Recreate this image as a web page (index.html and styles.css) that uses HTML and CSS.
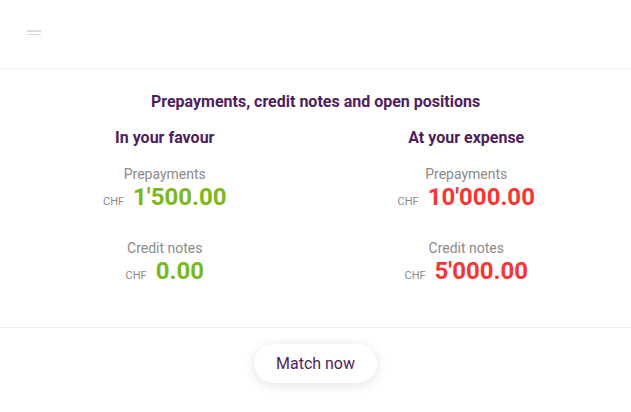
FILE: index.html
```html
<!DOCTYPE html>
<html>
<head>
<meta charset="utf-8">
<link rel="stylesheet" href="styles.css">
</head>
<body>
<header class="header">
  <button class="menu" aria-label="Menu"><span></span><span></span></button>
</header>
<main class="content">
  <h1 class="title">Prepayments, credit notes and open positions</h1>
  <div class="columns">
    <section class="col">
      <h2 class="col-title">In your favour</h2>
      <div class="item">
        <div class="label">Prepayments</div>
        <div class="amount"><span class="cur">CHF</span><span class="val pos">1'500.00</span></div>
      </div>
      <div class="item">
        <div class="label">Credit notes</div>
        <div class="amount"><span class="cur">CHF</span><span class="val pos">0.00</span></div>
      </div>
    </section>
    <section class="col">
      <h2 class="col-title">At your expense</h2>
      <div class="item">
        <div class="label">Prepayments</div>
        <div class="amount"><span class="cur">CHF</span><span class="val neg">10'000.00</span></div>
      </div>
      <div class="item">
        <div class="label">Credit notes</div>
        <div class="amount"><span class="cur">CHF</span><span class="val neg">5'000.00</span></div>
      </div>
    </section>
  </div>
</main>
<footer class="footer">
  <button class="match">Match now</button>
</footer>
</body>
</html>
```

FILE: styles.css
```css
* { box-sizing: border-box; }
html, body { margin: 0; padding: 0; background: #fff; }
body {
  font-family: Roboto, "Liberation Sans", sans-serif;
  width: 631px;
  height: 412px;
  overflow: hidden;
}
.header {
  height: 69px;
  border-bottom: 1px solid #ededed;
  padding: 30px 0 0 27px;
}
.menu {
  display: flex;
  flex-direction: column;
  gap: 2px;
  padding: 0;
  border: 0;
  background: none;
  width: 14px;
}
.menu span {
  display: block;
  height: 1.5px;
  width: 14px;
  background: #dcdcdc;
}
.content {
  padding: 24px 14px 0;
  height: 259px;
  border-bottom: 1px solid #ededed;
}
.title {
  margin: 0;
  font-size: 16px;
  line-height: 18px;
  font-weight: 700;
  color: #4f1d5e;
  text-align: center;
}
.columns {
  display: grid;
  grid-template-columns: 1fr 1fr;
  margin-top: 18px;
}
.col { text-align: center; }
.col-title {
  margin: 0;
  font-size: 16px;
  line-height: 18px;
  font-weight: 700;
  color: #4f1d5e;
}
.item { margin-top: 19px; }
.item + .item { margin-top: 29px; }
.label {
  font-size: 14px;
  line-height: 16px;
  color: #8a8a8a;
}
.amount {
  display: flex;
  justify-content: center;
  align-items: baseline;
  gap: 9px;
  margin-top: 1px;
}
.cur {
  font-size: 11px;
  color: #8a8a8a;
}
.val {
  font-size: 24px;
  line-height: 28px;
  font-weight: 700;
}
.pos { color: #7cb71c; }
.neg { color: #fa3333; }
.footer {
  display: flex;
  justify-content: center;
  padding-top: 16px;
}
.match {
  height: 39px;
  width: 123px;
  border: 0;
  border-radius: 20px;
  background: #fff;
  box-shadow: 0 2px 12px rgba(0,0,0,0.12);
  font-family: Roboto, "Liberation Sans", sans-serif;
  font-size: 16px;
  color: #4f1d5e;
}
```
